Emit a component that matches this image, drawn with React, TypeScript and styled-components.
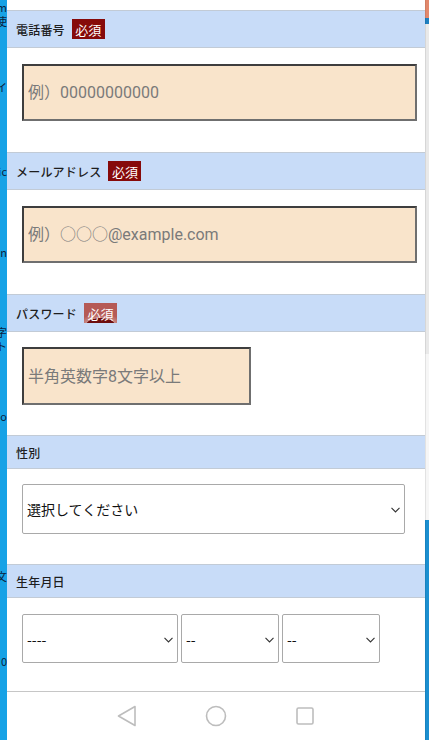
import React from 'react';
import styled, { createGlobalStyle } from 'styled-components';

const GlobalStyle = createGlobalStyle`
  html, body {
    margin: 0;
    padding: 0;
    background: #ffffff;
    overflow: hidden;
  }
  body {
    font-family: 'Noto Sans CJK JP', 'Noto Sans', Roboto, sans-serif;
  }
`;

const Screen = styled.div`
  display: flex;
  width: 429px;
  height: 740px;
  overflow: hidden;
`;

const LeftStrip = styled.div`
  width: 7px;
  flex: none;
  display: flex;
  flex-direction: column;
  background: #17a2e6;
  overflow: hidden;
`;

const StripGlyph = styled.div<{ $h: number }>`
  height: ${({ $h }) => $h}px;
  flex: none;
  display: flex;
  justify-content: flex-end;
  align-items: flex-end;
  font-size: 11px;
  line-height: 13px;
  color: #0b2340;
  white-space: nowrap;
`;

const RightStrip = styled.div`
  width: 4px;
  flex: none;
  display: flex;
  flex-direction: column;
`;

const StripSegment = styled.div<{ $h: number; $c: string }>`
  height: ${({ $h }) => $h}px;
  flex: none;
  background: ${({ $c }) => $c};
  border-left: 1px solid rgba(0, 0, 0, 0.08);
`;

const Main = styled.div`
  flex: 1;
  display: flex;
  flex-direction: column;
  padding-top: 10px;
  background: #ffffff;
`;

const Form = styled.div`
  flex: 1;
  display: flex;
  flex-direction: column;
`;

const Header = styled.div<{ $tall?: boolean }>`
  height: ${({ $tall }) => ($tall ? 38 : 34)}px;
  box-sizing: border-box;
  display: flex;
  align-items: center;
  gap: 7px;
  padding-left: 9px;
  background: #c8dcf8;
  border-top: 1px solid #c2cbd6;
  border-bottom: 1px solid #c2cbd6;
`;

const Label = styled.span`
  font-size: 12px;
  font-weight: 500;
  color: #1e1e1e;
  letter-spacing: 0.2px;
`;

const Badge = styled.span<{ $faded?: boolean }>`
  display: inline-flex;
  align-items: center;
  justify-content: center;
  width: 33px;
  height: 20px;
  font-size: 13px;
  font-weight: 400;
  color: #ffffff;
  background: ${({ $faded }) =>
    $faded
      ? 'radial-gradient(ellipse 70% 55% at 50% 110%, #6e0e0e 60%, #c98a86 64%, #b55a56 100%)'
      : '#860a0a'};
`;

const Body = styled.div<{ $top?: number; $bottom?: number }>`
  display: flex;
  gap: 3px;
  padding: ${({ $top }) => $top ?? 16}px 0 ${({ $bottom }) => $bottom ?? 31}px 15px;
`;

const TextBox = styled.input<{ $w: number; $h: number }>`
  width: ${({ $w }) => $w}px;
  height: ${({ $h }) => $h}px;
  box-sizing: border-box;
  margin: 0;
  padding: 0 4px;
  background: #f9e4cb;
  border: 2px solid #3e3e3e;
  border-right-color: #6f6f6f;
  border-bottom-color: #6f6f6f;
  border-radius: 0;
  font-family: Roboto, 'Noto Sans CJK JP', sans-serif;
  font-size: 16px;
  color: #333;
  &::placeholder {
    color: #7a7a7a;
  }
`;

const SelectWrap = styled.div<{ $w: number; $h: number }>`
  position: relative;
  width: ${({ $w }) => $w}px;
  height: ${({ $h }) => $h}px;
  flex: none;
`;

const Select = styled.select`
  appearance: none;
  width: 100%;
  height: 100%;
  box-sizing: border-box;
  margin: 0;
  padding: 0 4px;
  background: #ffffff;
  border: 1px solid #a9a9a9;
  border-radius: 2px;
  font-family: 'Noto Sans CJK JP', Roboto, sans-serif;
  font-size: 14px;
  color: #111;
`;

const Chevron = styled.svg`
  position: absolute;
  right: 5px;
  top: 50%;
  width: 9px;
  height: 6px;
  margin-top: -2px;
  fill: none;
  stroke: #333;
  stroke-width: 1.1;
  pointer-events: none;
`;

const NavBar = styled.div`
  height: 48px;
  flex: none;
  display: flex;
  align-items: center;
  justify-content: center;
  gap: 67px;
  border-top: 1px solid #c6c6c6;
  background: #ffffff;
`;

const NavIcon = styled.svg`
  width: 22px;
  height: 22px;
  fill: none;
  stroke: #bdbdbd;
  stroke-width: 1.6;
  stroke-linejoin: round;
`;

const leftGlyphs: [number, string][] = [
  [14, 'm'],
  [14, '使'],
  [66, 'イ'],
  [84, 'ic'],
  [81, 'in'],
  [80, '字'],
  [14, 'ト'],
  [70, 'o'],
  [160, '文'],
  [85, '0'],
];

const rightSegments: [number, string][] = [
  [18, '#e2886c'],
  [6, '#1d7fc0'],
  [330, '#e9e9e9'],
  [166, '#f6f6f6'],
  [220, '#1b8fd0'],
];

interface DropdownProps {
  w: number;
  h: number;
  options: string[];
}

const Dropdown: React.FC<DropdownProps> = ({ w, h, options }) => (
  <SelectWrap $w={w} $h={h}>
    <Select defaultValue={options[0]}>
      {options.map((o) => (
        <option key={o} value={o}>
          {o}
        </option>
      ))}
    </Select>
    <Chevron viewBox="0 0 9 6">
      <path d="M0.5 0.8 L4.5 5 L8.5 0.8" />
    </Chevron>
  </SelectWrap>
);

const App: React.FC = () => (
  <>
    <GlobalStyle />
    <Screen>
      <LeftStrip>
        {leftGlyphs.map(([h, t], i) => (
          <StripGlyph key={i} $h={h}>
            {t}
          </StripGlyph>
        ))}
      </LeftStrip>
      <Main>
        <Form>
          <Header $tall>
            <Label>電話番号</Label>
            <Badge>必須</Badge>
          </Header>
          <Body>
            <TextBox $w={395} $h={57} placeholder="例）00000000000" />
          </Body>
          <Header $tall>
            <Label>メールアドレス</Label>
            <Badge>必須</Badge>
          </Header>
          <Body>
            <TextBox $w={395} $h={57} placeholder="例）○○○@example.com" />
          </Body>
          <Header $tall>
            <Label>パスワード</Label>
            <Badge $faded>必須</Badge>
          </Header>
          <Body $top={15} $bottom={30}>
            <TextBox $w={229} $h={58} type="text" placeholder="半角英数字8文字以上" />
          </Body>
          <Header>
            <Label>性別</Label>
          </Header>
          <Body $top={15} $bottom={30}>
            <Dropdown w={383} h={50} options={['選択してください', '男性', '女性']} />
          </Body>
          <Header>
            <Label>生年月日</Label>
          </Header>
          <Body $bottom={28}>
            <Dropdown w={156} h={49} options={['----']} />
            <Dropdown w={98} h={49} options={['--']} />
            <Dropdown w={98} h={49} options={['--']} />
          </Body>
        </Form>
        <NavBar>
          <NavIcon viewBox="0 0 22 22">
            <path d="M19 1.5 L2.5 11 L19 20.5 Z" />
          </NavIcon>
          <NavIcon viewBox="0 0 22 22">
            <circle cx="11" cy="11" r="9.5" />
          </NavIcon>
          <NavIcon viewBox="0 0 22 22">
            <rect x="3" y="3" width="16" height="16" rx="1.5" />
          </NavIcon>
        </NavBar>
      </Main>
      <RightStrip>
        {rightSegments.map(([h, c], i) => (
          <StripSegment key={i} $h={h} $c={c} />
        ))}
      </RightStrip>
    </Screen>
  </>
);

export default App;
